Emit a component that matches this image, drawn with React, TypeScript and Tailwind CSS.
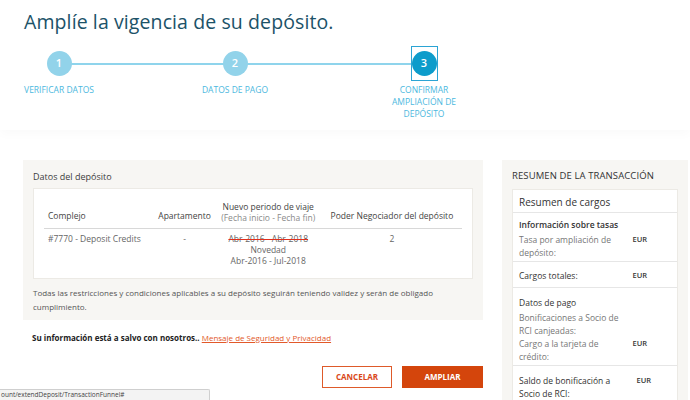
import React from "react";

const steps = [
  { n: "1", label: ["VERIFICAR DATOS"], active: false, ml: "ml-[19px]" },
  { n: "2", label: ["DATOS DE PAGO"], active: false, ml: "ml-[96px]" },
  { n: "3", label: ["CONFIRMAR", "AMPLIACIÓN DE", "DEPÓSITO"], active: true, ml: "ml-[109px]" },
];

function Stepper() {
  return (
    <div className="relative mt-[11px] flex">
      {/* línea de fondo entre pasos */}
      <div className="absolute left-[59px] top-[17px] h-[2px] w-[365px] bg-[#8fd4ec]" />
      {steps.map((s) => (
        <div key={s.n} className={`${s.ml} relative flex w-[80px] flex-col items-center`}>
          <div
            className={
              s.active
                ? "flex flex-col items-center border-[1.5px] border-[#2ba4d4] py-[4px]"
                : "flex flex-col items-center border-[1.5px] border-transparent py-[4px]"
            }
          >
            <div
              className={
                s.active
                  ? "flex h-[25px] w-[25px] items-center justify-center rounded-full bg-[#0d9ccb] text-[11px] font-semibold text-white"
                  : "flex h-[25px] w-[25px] items-center justify-center rounded-full bg-[#92d3ea] text-[11px] font-semibold text-white"
              }
            >
              {s.n}
            </div>
          </div>
          <div className="mt-[2.5px] text-center text-[8.5px] uppercase leading-[12px] text-[#4cb8de]">
            {s.label.map((l) => (
              <div key={l} className="whitespace-nowrap">
                {l}
              </div>
            ))}
          </div>
        </div>
      ))}
    </div>
  );
}

function DepositPanel() {
  return (
    <div className="w-[460px] bg-[#f7f6f3] px-[10px] pb-[6px] pt-[10px]">
      <div className="text-[9px] text-[#3d3d3d]">Datos del depósito</div>
      <div className="mt-[4px] border border-[#eceae5] bg-white px-[10px] pb-[12px] pt-[12px]">
        <table className="w-full text-[8.5px] text-[#444]">
          <thead>
            <tr className="border-b border-[#d8d8d8]">
              <th className="pb-[5px] pl-[4px] text-left align-bottom font-normal">Complejo</th>
              <th className="pb-[5px] text-center align-bottom font-normal">Apartamento</th>
              <th className="pb-[5px] text-center align-bottom font-normal leading-[11px]">
                <div>Nuevo periodo de viaje</div>
                <div className="text-[#8a8a8a]">(Fecha inicio - Fecha fin)</div>
              </th>
              <th className="pb-[5px] text-center align-bottom font-normal">Poder Negociador del depósito</th>
            </tr>
          </thead>
          <tbody>
            <tr className="align-top text-[#666]">
              <td className="pl-[4px] pt-[4px]">#7770 - Deposit Credits</td>
              <td className="pt-[4px] text-center">-</td>
              <td className="pt-[4px] text-center leading-[11px]">
                <div className="line-through decoration-[#e0301e]">Abr-2016 - Abr-2018</div>
                <div>Novedad</div>
                <div>Abr-2016 - Jul-2018</div>
              </td>
              <td className="pt-[4px] text-center">2</td>
            </tr>
          </tbody>
        </table>
      </div>
      <p className="mt-[7px] text-[8px] leading-[14px] text-[#555]">
        Todas las restricciones y condiciones aplicables a su depósito seguirán teniendo validez y serán de obligado
        cumplimiento.
      </p>
    </div>
  );
}

const eur = "ml-auto mr-[24px] text-[7.5px] font-semibold text-[#333]";

function SummaryPanel() {
  return (
    <div className="w-[186px] bg-[#f7f6f3] px-[10px] pt-[9px]">
      <div className="text-[9.5px] uppercase tracking-[0.1px] text-[#333]">Resumen de la transacción</div>
      <div className="mt-[6px] border border-[#eceae5] bg-white text-[8.5px] leading-[13px]">
        <div className="border-b border-[#e6e6e6] px-[6px] pb-[3px] pt-[5px] text-[10px] leading-[14px] text-[#333]">
          Resumen de cargos
        </div>
        <div className="border-b border-[#e6e6e6] px-[6px] pb-[2px] pt-[5px]">
          <div className="font-semibold text-[#333]">Información sobre tasas</div>
          <div className="mt-[2px] flex">
            <div className="w-[104px] text-[#777]">Tasa por ampliación de depósito:</div>
            <div className={eur}>EUR</div>
          </div>
        </div>
        <div className="flex border-b border-[#e6e6e6] px-[6px] pb-[5px] pt-[7px]">
          <div className="w-[104px] text-[#333]">Cargos totales:</div>
          <div className={eur}>EUR</div>
        </div>
        <div className="border-b border-[#e6e6e6] px-[6px] pb-[2px] pt-[8px]">
          <div className="text-[#333]">Datos de pago</div>
          <div className="mt-[2px] w-[104px] text-[#777]">Bonificaciones a Socio de RCI canjeadas:</div>
          <div className="flex">
            <div className="w-[104px] text-[#777]">Cargo a la tarjeta de crédito:</div>
            <div className={eur}>EUR</div>
          </div>
        </div>
        <div className="flex px-[6px] pb-[10px] pt-[8px]">
          <div className="w-[104px] text-[#333]">Saldo de bonificación a Socio de RCI:</div>
          <div className="ml-auto mr-[20px] text-[7.5px] font-semibold text-[#333]">EUR</div>
        </div>
      </div>
    </div>
  );
}

export default function App() {
  return (
    <div
      className="relative h-[400px] w-[690px] overflow-hidden bg-white"
      style={{ fontFamily: '"Open Sans", "Liberation Sans", sans-serif' }}
    >
      {/* Cabecera con título y pasos */}
      <div className="h-[130px] bg-white px-[24px] pt-[9px] shadow-[0_4px_10px_rgba(0,0,0,0.025)]">
        <h1 className="text-[19.5px] leading-[26px] tracking-[0.1px] text-[#1c5268]">
          Amplíe la vigencia de su depósito.
        </h1>
        <div className="-ml-[24px]">
          <Stepper />
        </div>
      </div>

      <div className="flex gap-[19px] pl-[23px] pt-[30px]">
        <div>
          <DepositPanel />
          <div className="ml-[9px] mt-[12px] text-[8px] text-[#222]">
            <span className="font-bold">Su información está a salvo con nosotros.. </span>
            <a href="#" className="text-[#e2592a] underline">
              Mensaje de Seguridad y Privacidad
            </a>
          </div>
          <div className="mt-[22px] flex justify-end gap-[10px]">
            <button className="h-[22px] w-[70px] border border-[#de5a2a] bg-white text-[8px] font-bold text-[#d9481a]">
              CANCELAR
            </button>
            <button className="h-[22px] w-[81px] bg-[#d4450c] text-[8px] font-bold text-white">AMPLIAR</button>
          </div>
        </div>
        <SummaryPanel />
      </div>

      {/* barra de estado del navegador */}
      <div className="absolute bottom-0 left-0 h-[11px] w-[210px] rounded-tr-[2px] border-r border-t border-[#cfcfcf] bg-[#f3f3f3] pl-[1px] text-[6.5px] leading-[10px] text-[#444]">
        ount/extendDeposit/TransactionFunnel#
      </div>
    </div>
  );
}
